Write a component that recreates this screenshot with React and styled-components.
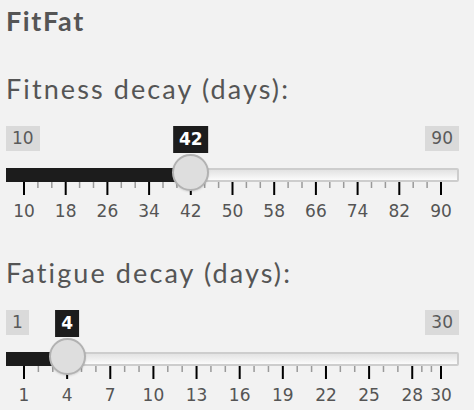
import React from "react";
import styled, { createGlobalStyle } from "styled-components";

const GlobalStyle = createGlobalStyle`
  html, body {
    margin: 0;
    padding: 0;
    background: #f2f2f2;
  }
  body {
    font-family: Lato, "Open Sans", sans-serif;
    color: #555;
  }
`;

const TRACK_W = 453;
const PAD = 18;
const SPAN = TRACK_W - PAD * 2;

const Page = styled.div`
  display: flex;
  flex-direction: column;
  padding: 5px 15px 0 6px;
`;

const Title = styled.h1`
  margin: 0 0 36px;
  font-size: 27px;
  line-height: 32px;
  font-weight: 700;
  letter-spacing: 1.6px;
  color: #555;
`;

const Field = styled.div`
  display: flex;
  flex-direction: column;
  margin-bottom: 35px;
`;

const Label = styled.label`
  margin-bottom: 21px;
  font-size: 27px;
  line-height: 32px;
  font-weight: 400;
  letter-spacing: 2.1px;
  color: #555;
`;

const SliderBox = styled.div`
  position: relative;
  width: ${TRACK_W}px;
  height: 96px;
  font-family: "DejaVu Sans", Verdana, sans-serif;
`;

const EndRow = styled.div`
  display: flex;
  justify-content: space-between;
  align-items: flex-start;
  height: 42px;
`;

const EndBadge = styled.span`
  height: 25px;
  line-height: 25px;
  padding: 0 6px;
  font-size: 17px;
  background: #dadada;
  color: #5a5a5a;
`;

const ValueBadge = styled.span`
  position: absolute;
  top: 0;
  height: 27px;
  line-height: 27px;
  padding: 0 6px;
  font-size: 17px;
  font-weight: 700;
  background: #1c1c1c;
  color: #fff;
  transform: translateX(-50%);
  z-index: 2;
`;

const Track = styled.div`
  position: relative;
  height: 14px;
  box-sizing: border-box;
  border: 2px solid #cdcdcd;
  border-radius: 2px;
  background: linear-gradient(to bottom, #e3e3e3, #fbfbfb);
`;

const Fill = styled.div`
  position: absolute;
  left: -2px;
  top: -2px;
  height: 14px;
  background: #1c1c1c;
`;

const Handle = styled.div`
  position: absolute;
  top: 28px;
  width: 37px;
  height: 37px;
  box-sizing: border-box;
  border-radius: 50%;
  border: 2px solid #b2b2b2;
  background: #dedede;
  box-shadow: 0 1px 2px rgba(0, 0, 0, 0.12);
  z-index: 3;
`;

const Ticks = styled.svg`
  display: block;
  width: ${TRACK_W}px;
  height: 14px;
`;

const GridLabels = styled.div`
  position: relative;
  height: 24px;
  margin-top: 5px;
`;

const GridLabel = styled.span`
  position: absolute;
  top: 0;
  font-size: 17px;
  line-height: 20px;
  color: #555;
  transform: translateX(-50%);
  white-space: nowrap;
`;

function Slider({ min, max, value, step, smallEvery }) {
  const pos = (v) => PAD + ((v - min) / (max - min)) * SPAN;

  const majors = [];
  for (let v = min; v < max; v += step) majors.push(v);
  majors.push(max);

  const minors = [];
  for (let i = 1; i < majors.length; i++) {
    const a = pos(majors[i - 1]);
    const b = pos(majors[i]);
    const w = (b - a) / (smallEvery + 1);
    for (let k = 1; k <= smallEvery; k++) minors.push(b - w * k);
  }

  const x = pos(value);

  return (
    <SliderBox>
      <EndRow>
        <EndBadge>{min}</EndBadge>
        <EndBadge>{max}</EndBadge>
      </EndRow>
      <ValueBadge style={{ left: x }}>{value}</ValueBadge>
      <Track>
        <Fill style={{ width: x + 2 }} />
      </Track>
      <Handle style={{ left: x - 18.5 }} />
      <Ticks viewBox={`0 0 ${TRACK_W} 14`}>
        {minors.map((m, i) => (
          <rect key={`s${i}`} x={m - 0.75} y={0} width={1.5} height={6} fill="#9a9a9a" />
        ))}
        {majors.map((m, i) => (
          <rect key={`b${i}`} x={pos(m) - 1} y={0} width={2} height={13} fill="#000" />
        ))}
      </Ticks>
      <GridLabels>
        {majors.map((m) => (
          <GridLabel key={m} style={{ left: pos(m) }}>
            {m}
          </GridLabel>
        ))}
      </GridLabels>
    </SliderBox>
  );
}

export default function App() {
  return (
    <>
      <GlobalStyle />
      <Page>
        <Title>FitFat</Title>
        <Field>
          <Label>Fitness decay (days):</Label>
          <Slider min={10} max={90} value={42} step={8} smallEvery={2} />
        </Field>
        <Field>
          <Label>Fatigue decay (days):</Label>
          <Slider min={1} max={30} value={4} step={3} smallEvery={2} />
        </Field>
      </Page>
    </>
  );
}
